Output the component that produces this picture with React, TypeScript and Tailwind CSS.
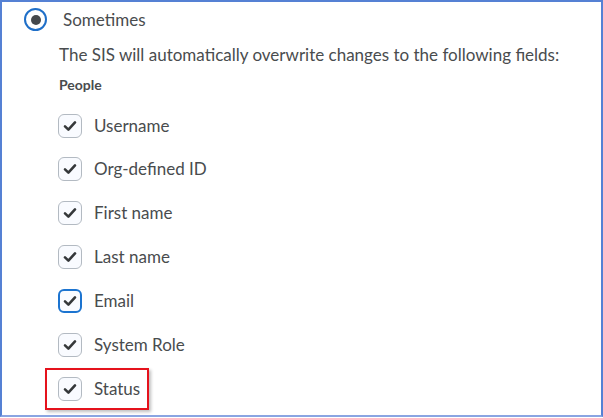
import { useState } from 'react';

const fields = [
    { name: 'Username', focus: false },
    { name: 'Org-defined ID', focus: false },
    { name: 'First name', focus: false },
    { name: 'Last name', focus: false },
    { name: 'Email', focus: true },
    { name: 'System Role', focus: false },
    { name: 'Status', focus: false, marked: true },
];

function Check({ focus }: { focus: boolean }) {
    return (
        <div
            className={
                focus
                    ? 'flex h-[24px] w-[24px] items-center justify-center rounded-[6px] border-2 border-[#1c74d0] bg-[#f9fbff]'
                    : 'flex h-[24px] w-[24px] items-center justify-center rounded-[6px] border border-[#b3bac2] bg-[#f9fbff]'
            }
        >
            <svg width="16" height="16" viewBox="0 0 16 16">
                <path d="M3 8.4 L6.4 11.6 L13 4.4" fill="none" stroke="#35383a" strokeWidth="2.6" strokeLinecap="round" strokeLinejoin="round" />
            </svg>
        </div>
    );
}

export default function App() {
    const [checked] = useState(fields);

    return (
        <div className="h-[418px] w-[603px] bg-white font-['Lato',sans-serif] text-[#494c4e]">
            <div className="h-[417px] w-[603px] border-2 border-[#5581d4] border-b-[#8aa5e2]">
                <div className="flex items-center pl-[22px] pt-[5px]">
                    <div className="flex h-[23px] w-[23px] items-center justify-center rounded-full border-2 border-[#1f6fc8]">
                        <div className="h-[10px] w-[10px] rounded-full bg-[#45484b]" />
                    </div>
                    <span className="ml-[16px] text-[17px]">Sometimes</span>
                </div>
                <div className="pl-[57px] pt-[11px] text-[17px] leading-[22px]">
                    The SIS will automatically overwrite changes to the following fields:
                </div>
                <div className="pl-[57px] pt-[10px] text-[14px] font-bold leading-[18px]">People</div>
                <div className="flex flex-col gap-[17.9px] pt-[19px]">
                    {checked.map((f) => (
                        <div key={f.name} className="flex pl-[45px]">
                            <div
                                className={
                                    f.marked
                                        ? 'flex items-center -ml-[2px] -my-[8px] h-[42px] border-2 border-[#e5121c] pl-[11px] pr-[7px] shadow-[2px_2px_3px_rgba(0,0,0,0.25)]'
                                        : 'flex items-center h-[26px] pl-[11px] pr-[7px] border-2 border-transparent -ml-[2px]'
                                }
                            >
                                <Check focus={f.focus} />
                                <span className="ml-[12px] text-[17px] leading-[22px]">{f.name}</span>
                            </div>
                        </div>
                    ))}
                </div>
            </div>
        </div>
    );
}
